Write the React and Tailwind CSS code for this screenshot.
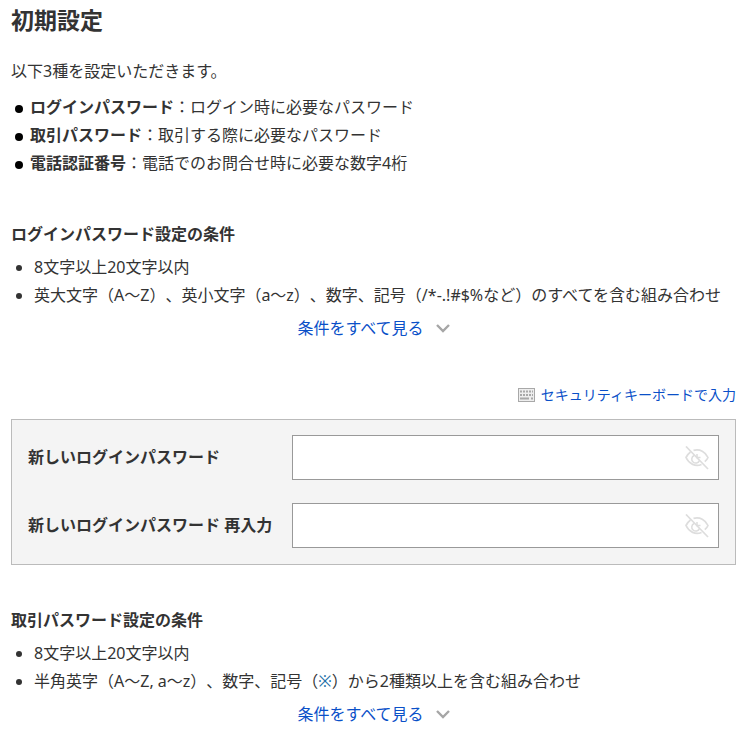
import { useState } from "react";

const introItems = [
  { name: "ログインパスワード", text: "：ログイン時に必要なパスワード" },
  { name: "取引パスワード", text: "：取引する際に必要なパスワード" },
  { name: "電話認証番号", text: "：電話でのお問合せ時に必要な数字4桁" },
];

function ChevronIcon() {
  return (
    <svg width="14" height="10" viewBox="0 0 14 10" fill="none" stroke="#a6a6a6" strokeWidth="2.4" aria-hidden="true">
      <path d="M1 2l6 6 6-6" />
    </svg>
  );
}

function KeyboardIcon() {
  return (
    <svg width="17" height="14" viewBox="0 0 17 14" aria-hidden="true">
      <rect x="0.5" y="0.5" width="16" height="13" fill="#eeeeee" stroke="#a8a8a8" />
      <path d="M2 3.5h13M2 7h13" stroke="#a8a8a8" strokeWidth="2" strokeDasharray="2 1" />
      <path d="M2 10.5h9M13 10.5h2" stroke="#a8a8a8" strokeWidth="2" />
    </svg>
  );
}

function EyeOffIcon() {
  return (
    <svg width="24" height="24" viewBox="0 0 24 24" fill="none" stroke="#dddddd" strokeWidth="1.7" aria-hidden="true">
      <path d="M8.5 4.4C15 2.600 20.500 6 23 11.500c-.7 1.600-1.800 3-3.200 4.200" />
      <path d="M5.500 6C3.500 7.500 2 9.500 1 11.500c3 6.500 9.500 9.500 15.500 7" />
      <path d="M9 9.500a4 4 0 1 0 5.500 5M12 8v3.500h3.500" strokeWidth="1.500" />
      <path d="M1 0.500l22 22.500" />
    </svg>
  );
}

function PasswordField({ id, label }) {
  const [visible, setVisible] = useState(false);

  return (
    <div className="flex items-center">
      <label htmlFor={id} className="w-[264px] shrink-0 pb-0.5 font-bold">
        {label}
      </label>
      <div className="relative flex-1">
        <input
          id={id}
          type={visible ? "text" : "password"}
          className="block h-[45px] w-full border border-[#999999] bg-white pl-3 pr-12"
        />
        <button
          type="button"
          aria-label="表示切替"
          onClick={() => setVisible(!visible)}
          className="absolute inset-y-0 right-[10px] flex items-center"
        >
          <EyeOffIcon />
        </button>
      </div>
    </div>
  );
}

function Conditions({ title, children }) {
  return (
    <section>
      <h2 className="font-bold leading-6">{title}</h2>
      <ul className="mt-[7px] list-disc pl-[23px] leading-7">{children}</ul>
      <div className="mt-[5px] flex justify-center">
        <button type="button" className="flex items-center gap-3 leading-7 text-[#0a50c8]">
          条件をすべて見る
          <ChevronIcon />
        </button>
      </div>
    </section>
  );
}

export default function App() {
  return (
    <main className="bg-white pt-1 pr-[14px] pb-1 pl-[11px] font-['Noto_Sans','Noto_Sans_CJK_JP',sans-serif] text-base text-[#333333] [text-spacing-trim:space-all]">
      <h1 className="text-[23px] font-bold leading-8">初期設定</h1>
      <p className="mt-[21px] leading-7">以下3種を設定いただきます。</p>
      <ul className="mt-2 leading-7">
        {introItems.map((item) => (
          <li key={item.name} className="flex items-center">
            <span className="mx-1 mt-1 size-2 shrink-0 rounded-full bg-black" />
            <p className="ml-[3px]">
              <b>{item.name}</b>
              {item.text}
            </p>
          </li>
        ))}
      </ul>

      <div className="mt-[45px]">
        <Conditions title="ログインパスワード設定の条件">
          <li>8文字以上20文字以内</li>
          <li>英大文字（A～Z）、英小文字（a～z）、数字、記号（/*-.!#$%など）のすべてを含む組み合わせ</li>
        </Conditions>
      </div>

      <div className="mt-[41px] flex justify-end">
        <a href="#keyboard" className="flex items-center gap-[6px] text-sm leading-6 text-[#0a50c8]">
          <KeyboardIcon />
          セキュリティキーボードで入力
        </a>
      </div>
      <form className="mt-3 flex flex-col gap-[23px] border border-[#bbbbbb] bg-[#f4f4f4] px-4 pt-[15px] pb-4">
        <PasswordField id="password" label="新しいログインパスワード" />
        <PasswordField id="password-confirm" label="新しいログインパスワード 再入力" />
      </form>

      <div className="mt-[43px]">
        <Conditions title="取引パスワード設定の条件">
          <li>8文字以上20文字以内</li>
          <li>
            半角英字（A～Z, a～z）、数字、記号（
            <a href="#symbols" className="text-[#1f6fa8]">※</a>
            ）から2種類以上を含む組み合わせ
          </li>
        </Conditions>
      </div>
    </main>
  );
}
